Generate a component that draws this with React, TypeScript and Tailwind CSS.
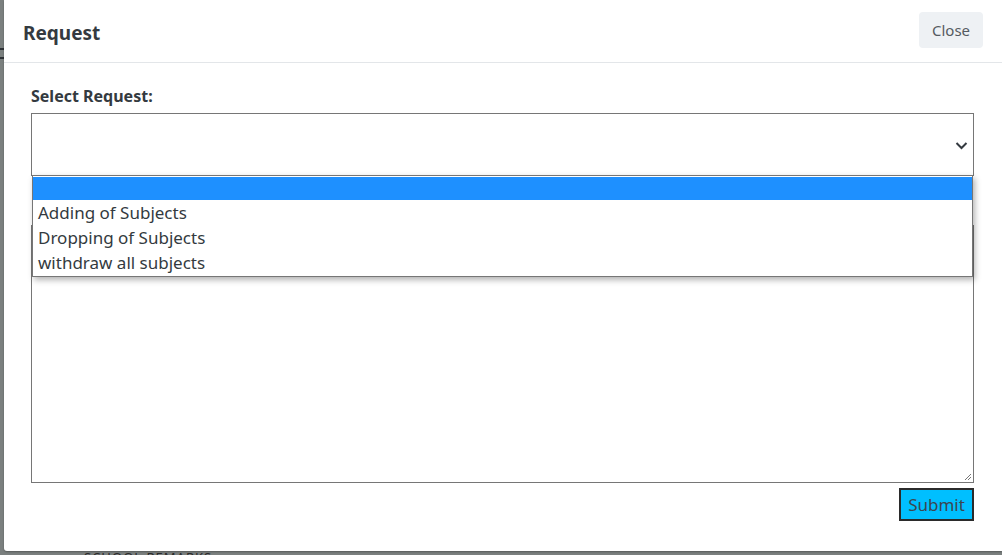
import React from "react";

const options = ["", "Adding of Subjects", "Dropping of Subjects", "withdraw all subjects"];

const App = () => {
  return (
    <div
      className="flex flex-col h-[555px] w-[1002px] overflow-hidden bg-[#7b807f]"
      style={{ fontFamily: '"Noto Sans", "Open Sans", sans-serif' }}
    >
      <div className="flex h-[551px] shrink-0">
        <div className="w-[4px] shrink-0 flex flex-col pt-[48px]">
          <div className="h-[2px] bg-[#2e3236]" />
          <div className="h-[7px]" />
          <div className="h-[2px] bg-[#2e3236]" />
        </div>
        <div className="flex-1 bg-white flex flex-col rounded-bl-[3px] shadow-[0_1px_2px_rgba(0,0,0,0.3)]">
          {/* header */}
          <div className="flex items-center justify-between h-[63px] border-b border-[#e3e6e9] pl-[19px] pr-[19px] pt-[2px]">
            <h1 className="text-[19px] font-bold text-[#343a40] mt-[3px]">Request</h1>
            <button className="h-[36px] w-[64px] rounded-[4px] bg-[#eef1f4] text-[15px] text-[#555b61] -mt-[4px]">
              Close
            </button>
          </div>

          {/* body */}
          <div className="flex flex-col pl-[27px] pr-[28px] pt-[21px]">
            <label className="text-[16px] font-bold text-[#343a40] leading-[24px]">Select Request:</label>
            <div className="relative mt-[5px]">
              <div className="h-[63px] border border-[#767676] flex items-center justify-end pr-[5px]">
                <svg width="13" height="9" viewBox="0 0 13 9" className="mt-[2px]">
                  <path d="M1.5 2 L6.5 7 L11.5 2" fill="none" stroke="#343a40" strokeWidth="2" />
                </svg>
              </div>
              {/* open dropdown list */}
              <div className="absolute left-[1px] right-[1px] top-[62px] z-10 bg-white border border-[#767676] shadow-[2px_3px_6px_rgba(0,0,0,0.3)] flex flex-col pt-[1px] pb-[1px]">
                {options.map((o, i) => (
                  <div
                    key={i}
                    className={
                      i === 0
                        ? "h-[23px] bg-[#1e90ff]"
                        : "h-[25px] px-[5px] text-[17px] leading-[25px] text-[#333a40]"
                    }
                  >
                    {o}
                  </div>
                ))}
              </div>
            </div>
            <div className="h-[49px]" />
            <div className="relative h-[258px] border border-[#767676]">
              <svg width="10" height="10" viewBox="0 0 10 10" className="absolute right-[1px] bottom-[1px]">
                <path d="M9 3 L3 9 M9 6 L6 9" stroke="#777" strokeWidth="1" />
              </svg>
            </div>
            <div className="flex justify-end mt-[5px]">
              <button className="h-[33px] w-[75px] bg-[#00bfff] border-2 border-[#2b2b2b] text-[17px] text-[#3b4650] leading-none">
                Submit
              </button>
            </div>
          </div>
        </div>
      </div>
      <div className="pl-[84px] text-[13px] leading-[14px] text-[#2a2a2a] tracking-[1px] -mt-[1px]">SCHOOL REMARKS</div>
    </div>
  );
};

export default App;
